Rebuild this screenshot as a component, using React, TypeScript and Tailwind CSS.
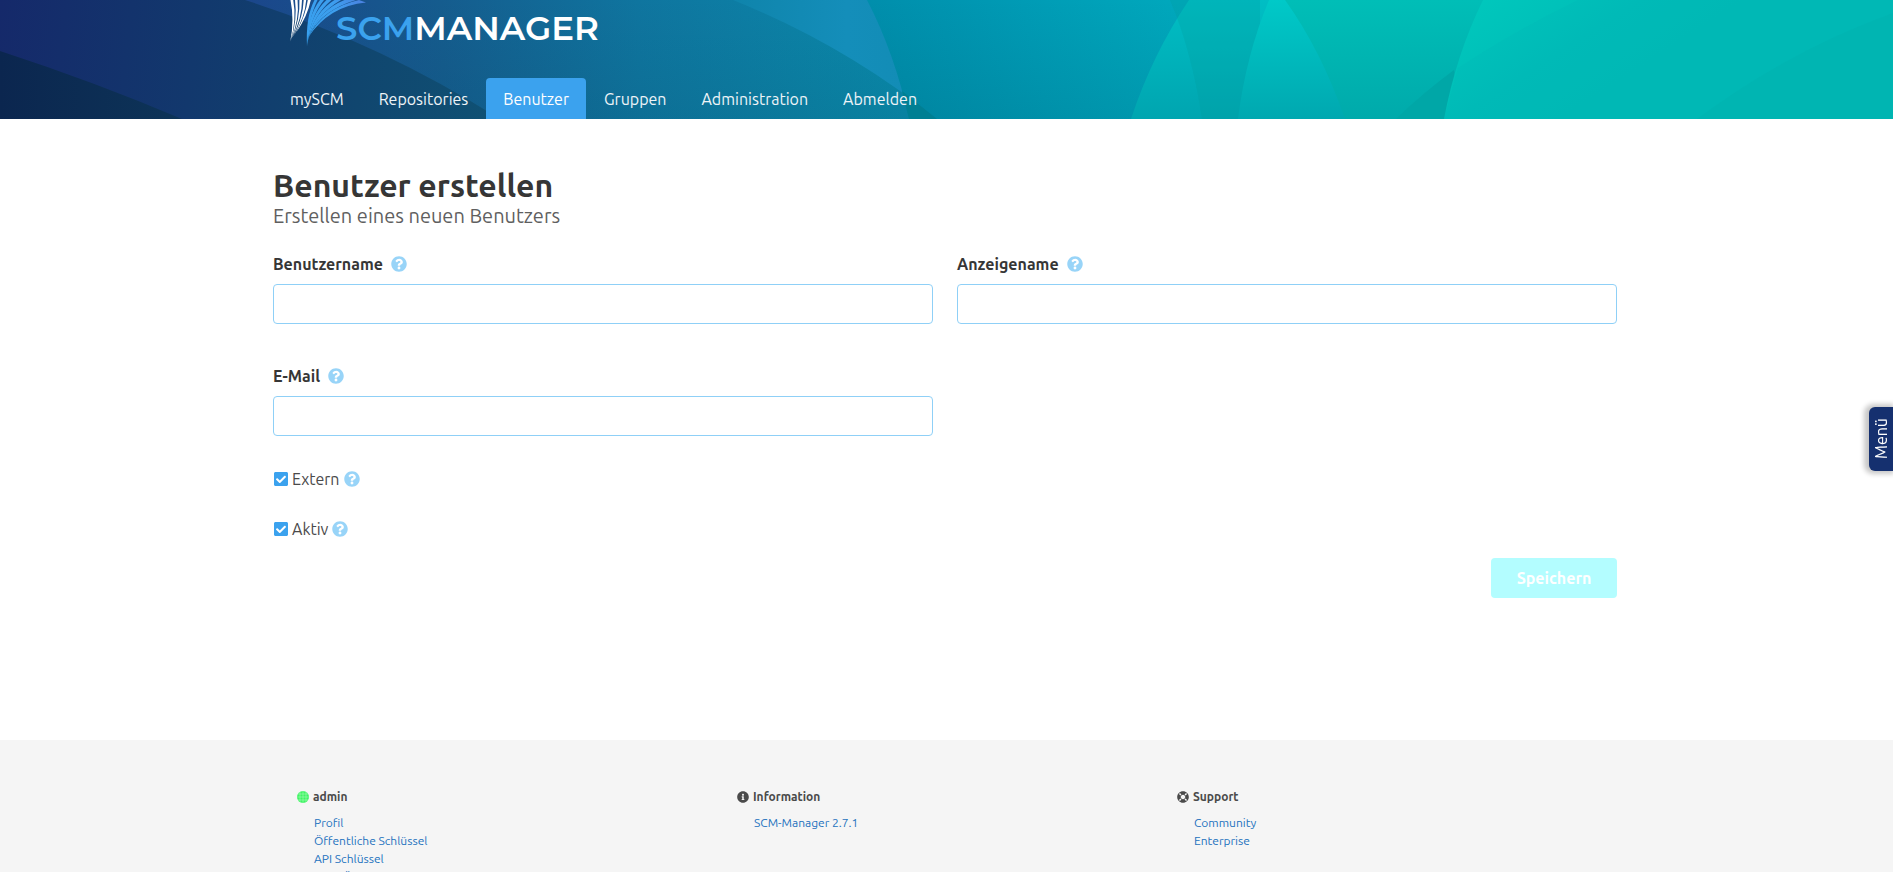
import React, { useState } from "react";
import { FaCheckSquare, FaInfoCircle, FaLifeRing, FaQuestionCircle, FaRegSquare } from "react-icons/fa";

const navItems = ["mySCM", "Repositories", "Benutzer", "Gruppen", "Administration", "Abmelden"];

function HeaderBackdrop() {
  return (
    <svg
      className="absolute inset-0 h-full w-full"
      viewBox="0 0 1893 119"
      preserveAspectRatio="none"
      aria-hidden="true"
    >
      <defs>
        <linearGradient id="base" gradientUnits="userSpaceOnUse" x1="0" y1="0" x2="560" y2="60">
          <stop offset="0" stopColor="#15296a" />
          <stop offset="0.35" stopColor="#12386d" />
          <stop offset="0.65" stopColor="#10466f" />
          <stop offset="1" stopColor="#0f5676" />
        </linearGradient>
        <linearGradient id="corner" x1="0" y1="0" x2="1" y2="0">
          <stop offset="0" stopColor="#0b264f" />
          <stop offset="1" stopColor="#0d3458" />
        </linearGradient>
        <linearGradient id="blue" gradientUnits="userSpaceOnUse" x1="245" y1="30" x2="900" y2="10">
          <stop offset="0" stopColor="#1b468b" />
          <stop offset="0.3" stopColor="#155c8e" />
          <stop offset="0.6" stopColor="#0f759f" />
          <stop offset="1" stopColor="#0a8aab" />
        </linearGradient>
        <linearGradient id="sky" x1="0" y1="0" x2="1" y2="0">
          <stop offset="0" stopColor="#0f84ab" />
          <stop offset="0.5" stopColor="#148eba" />
          <stop offset="1" stopColor="#118bb2" />
        </linearGradient>
        <linearGradient id="cyan" gradientUnits="userSpaceOnUse" x1="870" y1="70" x2="1190" y2="0">
          <stop offset="0" stopColor="#008dab" />
          <stop offset="0.5" stopColor="#009bb5" />
          <stop offset="1" stopColor="#00a9bd" />
        </linearGradient>
        <linearGradient id="aqua" x1="0" y1="0" x2="0" y2="1">
          <stop offset="0" stopColor="#00bec4" />
          <stop offset="1" stopColor="#00a5b0" />
        </linearGradient>
        <linearGradient id="bright" x1="0" y1="0" x2="0" y2="1">
          <stop offset="0" stopColor="#00c9c8" />
          <stop offset="1" stopColor="#00a8b0" />
        </linearGradient>
        <linearGradient id="teal" x1="0" y1="0" x2="0" y2="1">
          <stop offset="0" stopColor="#00beb7" />
          <stop offset="1" stopColor="#00aaab" />
        </linearGradient>
        <linearGradient id="mint" gradientUnits="userSpaceOnUse" x1="1483" y1="0" x2="1560" y2="119">
          <stop offset="0" stopColor="#00c7bc" />
          <stop offset="0.6" stopColor="#00bdb8" />
          <stop offset="1" stopColor="#00bab6" />
        </linearGradient>
        <linearGradient id="shade" x1="0" y1="0" x2="0" y2="1">
          <stop offset="0" stopColor="#004050" stopOpacity="0" />
          <stop offset="1" stopColor="#004050" stopOpacity="0.12" />
        </linearGradient>
      </defs>
      <rect width="1893" height="119" fill="url(#base)" />
      <path d="M0 51Q95 82 182 119H0Z" fill="url(#corner)" />
      <path d="M245 0Q380 43 500 119H940V0Z" fill="url(#blue)" />
      <path d="M245 0Q380 43 500 119H940V0Z" fill="url(#shade)" />
      <path d="M733 0Q845 45 937 119H960V0Z" fill="url(#sky)" />
      <path d="M867 0Q895 54 909 119H1250V0Z" fill="url(#cyan)" />
      <path d="M867 0Q895 54 909 119H1250V0Z" fill="url(#shade)" />
      <path d="M902 91L937 119H909Z" fill="#007f93" />
      <path d="M1189 0Q1152 55 1131 119H1320V0Z" fill="url(#aqua)" />
      <path d="M1170 0Q1192 52 1202 119H1260V0Z" fill="#009a9a" fillOpacity="0.25" />
      <path d="M1269 0Q1246 55 1238 119H1400V0Z" fill="url(#bright)" />
      <path d="M1285 0Q1321 50 1345 119H1500V0Z" fill="url(#teal)" />
      <path d="M1454 70Q1424 92 1396 119H1460Z" fill="#00a7a7" />
      <path d="M1483 0Q1456 55 1444 119H1893V0Z" fill="url(#mint)" />
      <path d="M1578 0Q1520 28 1458 68L1444 119H1893V0Z" fill="#00a8b0" fillOpacity="0.1" />
      <path d="M1893 13Q1790 50 1697 119H1893Z" fill="#00aaa8" fillOpacity="0.2" />
    </svg>
  );
}

function LogoMark() {
  return (
    <svg className="h-12 w-20 shrink-0" viewBox="0 0 80 48" fill="none" aria-hidden="true">
      <defs>
        <linearGradient id="leaf" gradientUnits="userSpaceOnUse" x1="16" y1="40" x2="76" y2="0">
          <stop offset="0" stopColor="#36a0ee" />
          <stop offset="0.6" stopColor="#3d9eee" />
          <stop offset="1" stopColor="#4c7fe0" />
        </linearGradient>
      </defs>
      <g fill="#fff">
        <path d="M0.500 0H3.200Q7 20 0.300 41.500Q4.500 20 0.500 0Z" />
        <path d="M5 0H7.600Q9.500 19 1 40Q7.500 19 5 0Z" />
        <path d="M9.400 0H12Q12 18 2.200 38Q10.300 18 9.400 0Z" />
        <path d="M13.700 0H16.200Q15 17 4 35.500Q13 17 13.700 0Z" />
        <path d="M17.800 0H20.800Q17.500 16 6.500 32Q16 14 17.800 0Z" />
      </g>
      <g fill="url(#leaf)">
        <path d="M24.500 0H27.500Q19 17 17 46.500Q15.500 17 24.500 0Z" />
        <path d="M30 0H34Q21 16 17.300 44Q17 17 30 0Z" />
        <path d="M36.500 0H41.500Q23.500 15 17.800 41Q20.500 15 36.500 0Z" />
        <path d="M44.500 0H51Q27 14 18.800 37.500Q24 13 44.500 0Z" />
        <path d="M54.500 0H66Q33 10 20.500 33Q30 10 54.500 0Z" />
        <path d="M69 0L76 2.500Q39 6 18.500 37Q33 8 69 0Z" />
      </g>
    </svg>
  );
}

function Help({ text }: { text: string }) {
  return (
    <span title={text}>
      <FaQuestionCircle className="size-4 text-[#98d4f8]" aria-hidden="true" />
    </span>
  );
}

function TextField({ id, label, type = "text" }: { id: string; label: string; type?: string }) {
  return (
    <div>
      <div className="mb-2 flex h-6 items-center gap-2">
        <label htmlFor={id} className="font-bold text-[#363636]">
          {label}
        </label>
        <Help text={label} />
      </div>
      <input
        id={id}
        type={type}
        className="block h-10 w-full rounded border border-[#8fd0f7] bg-white px-3 text-[#363636] outline-none focus:border-[#33b2e8]"
      />
    </div>
  );
}

function CheckField({ id, label }: { id: string; label: string }) {
  const [checked, setChecked] = useState(true);
  const Box = checked ? FaCheckSquare : FaRegSquare;
  return (
    <div className="flex h-6 items-center gap-1">
      <label htmlFor={id} className="relative flex items-center gap-[3px]">
        <input
          id={id}
          type="checkbox"
          checked={checked}
          onChange={(e) => setChecked(e.target.checked)}
          className="absolute inset-0 opacity-0"
        />
        <Box className="h-4 w-4 text-[#3ba2ee]" aria-hidden="true" />
        {label}
      </label>
      <Help text={label} />
    </div>
  );
}

function Avatar() {
  return (
    <svg className="size-3" viewBox="0 0 12 12" aria-hidden="true">
      <circle cx="6" cy="6" r="6" fill="#3df562" />
      <path d="M3 1v10M6 0v12M9 1v10M1 3h10M0 6h12M1 9h10" stroke="#b9fbc6" strokeWidth="0.500" />
    </svg>
  );
}

function FooterSection({ icon, title, links }: { icon: React.ReactNode; title: string; links: string[] }) {
  return (
    <section>
      <h2 className="flex h-[18px] items-center gap-1 font-bold text-[#4a4a4a]">
        {icon}
        {title}
      </h2>
      <ul className="mt-2 pl-[17px]">
        {links.map((link) => (
          <li key={link}>
            <a href="#" className="text-[#1d72be]">
              {link}
            </a>
          </li>
        ))}
      </ul>
    </section>
  );
}

export default function App() {
  return (
    <div className="flex h-screen flex-col overflow-hidden bg-white font-[Ubuntu,'Noto_Sans',sans-serif] text-base text-[#4a4a4a]">
      <header className="relative shrink-0 pr-[3px]">
        <HeaderBackdrop />
        <div className="relative mx-auto max-w-[1344px]">
          <a href="#" aria-label="SCM-Manager" className="flex h-[78px] items-start pl-[17px]">
            <LogoMark />
            <span className="-ml-[34px] pt-2 font-[Montserrat,Inter,sans-serif] text-[34px] leading-10 font-semibold text-white">
              <span className="text-[#3ba2ee]">SCM</span>MANAGER
            </span>
          </a>
          <nav className="flex gap-px">
            {navItems.map((item) => (
              <a
                key={item}
                href="#"
                className={
                  item === "Benutzer"
                    ? "flex h-[41px] items-center rounded-t bg-[#3ba2ee] px-[17px] text-white"
                    : "flex h-[41px] items-center px-[17px] text-[#eef4f8]"
                }
              >
                {item}
              </a>
            ))}
          </nav>
        </div>
      </header>

      <main className="shrink-0 grow pr-[3px]">
        <div className="mx-auto max-w-[1344px] pt-12 pb-[142px]">
          <h1 className="text-[32px] leading-9 font-bold text-[#363636]">Benutzer erstellen</h1>
          <p className="text-xl leading-[26px] text-[#5f5f5f]">Erstellen eines neuen Benutzers</p>
          <form className="mt-[23px]" onSubmit={(e) => e.preventDefault()}>
            <div className="grid grid-cols-2 gap-x-6 gap-y-10">
              <TextField id="username" label="Benutzername" />
              <TextField id="displayname" label="Anzeigename" />
              <TextField id="mail" label="E-Mail" type="email" />
            </div>
            <div className="mt-[31px] flex flex-col gap-[26px]">
              <CheckField id="external" label="Extern" />
              <CheckField id="active" label="Aktiv" />
            </div>
            <div className="mt-[17px] flex justify-end">
              <button type="submit" disabled className="h-10 w-[126px] rounded bg-[#b3fdff] font-bold text-white">
                Speichern
              </button>
            </div>
          </form>
        </div>
      </main>

      <footer className="shrink-0 bg-[#f5f5f5] pr-[3px] text-xs leading-[18px]">
        <div className="mx-auto -mb-10 grid max-w-[1344px] grid-cols-3 pt-12 pb-[45px] pl-6">
          <FooterSection
            icon={<Avatar />}
            title="admin"
            links={["Profil", "Öffentliche Schlüssel", "API Schlüssel", "Mein Überblick"]}
          />
          <FooterSection icon={<FaInfoCircle className="size-3" />} title="Information" links={["SCM-Manager 2.7.1"]} />
          <FooterSection icon={<FaLifeRing className="size-3" />} title="Support" links={["Community", "Enterprise"]} />
        </div>
      </footer>

      <button
        type="button"
        className="fixed top-[407px] right-0 flex h-16 w-6 items-center justify-center rounded-l-md bg-[#15306f] text-white shadow-[-2px_0_5px_3px_rgba(0,0,0,0.22)]"
      >
        <span className="rotate-180 [writing-mode:vertical-rl]">Menü</span>
      </button>
    </div>
  );
}
